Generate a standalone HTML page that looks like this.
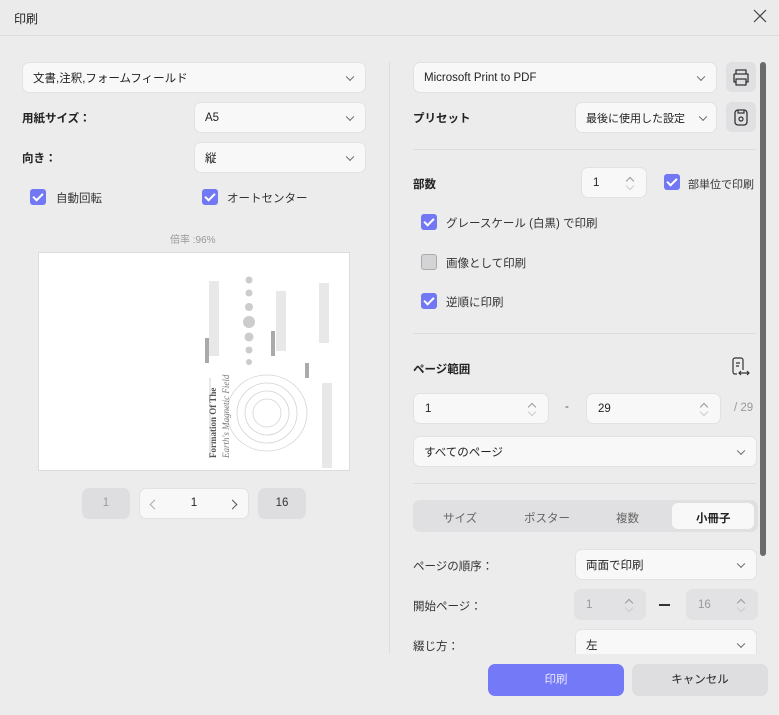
<!DOCTYPE html>
<html><head><meta charset="utf-8"><style>
*{box-sizing:border-box;margin:0;padding:0}
body{width:779px;height:715px;background:#ececec;font-family:"Liberation Sans","Noto Sans CJK JP",sans-serif;font-size:11.5px;color:#222;position:relative;overflow:hidden}
.a{position:absolute}
.dd{position:absolute;background:#f8f8f9;border:1px solid #e2e2e4;border-radius:7px;display:flex;align-items:center;padding-left:10px;font-size:11.5px;color:#222}
.dd .chev{position:absolute;right:12px;top:50%;width:6px;height:6px;border-right:1.2px solid #666;border-bottom:1.2px solid #666;transform:translateY(-70%) rotate(45deg)}
.lbl{position:absolute;font-size:11.5px;font-weight:bold;color:#222}
.lbl2{position:absolute;font-size:11.5px;color:#333}
.cb{position:absolute;width:16px;height:16px;border-radius:3px;background:#7277f3}
.cb::after{content:"";position:absolute;left:5px;top:2px;width:4px;height:8px;border-right:2px solid #fff;border-bottom:2px solid #fff;transform:rotate(45deg)}
.cb.off{background:#d4d4d6;border:1px solid #aaa}
.cb.off::after{display:none}
.sp{position:absolute;background:#f8f8f9;border:1px solid #e2e2e4;border-radius:7px;display:flex;align-items:center;padding-left:11px;font-size:11.5px}
.sp.dis{background:#e2e2e4;color:#999}
.arr{position:absolute;right:12px;top:8px;width:8px;height:14px}
.arr::before,.arr::after{content:"";position:absolute;left:1px;width:5px;height:5px;border-left:1.2px solid #999;border-top:1.2px solid #999}
.arr::before{top:2px;transform:rotate(45deg)}
.arr::after{top:7px;transform:rotate(225deg);border-color:#ccc}
.hr{position:absolute;height:1px;background:#dcdcdc}
.ib{position:absolute;width:30px;height:30px;background:#e0e0e2;border-radius:6px}
</style></head><body>
<div class="a" style="left:0;top:0;width:779px;height:36px;background:#ebebeb;border-bottom:1px solid #dcdcdc"></div>
<div class="a" style="left:14px;top:10px;font-size:12px">印刷</div>
<svg class="a" style="left:753px;top:9px" width="14" height="14"><path d="M1 1L13 13M13 1L1 13" stroke="#444" stroke-width="1.2"/></svg>
<div class="a" style="left:389px;top:62px;width:1px;height:592px;background:#dedede"></div>

<div class="dd" style="left:22px;top:62px;width:344px;height:31px">文書,注釈,フォームフィールド<span class="chev"></span></div>
<div class="lbl" style="left:22px;top:110px">用紙サイズ：</div>
<div class="dd" style="left:194px;top:102px;width:172px;height:31px">A5<span class="chev"></span></div>
<div class="lbl" style="left:22px;top:150px">向き：</div>
<div class="dd" style="left:194px;top:142px;width:172px;height:31px">縦<span class="chev"></span></div>
<div class="cb" style="left:30px;top:189px"></div><div class="lbl2" style="left:56px;top:190px">自動回転</div>
<div class="cb" style="left:202px;top:189px"></div><div class="lbl2" style="left:227px;top:190px">オートセンター</div>
<div class="a" style="left:170px;top:231px;font-size:10px;color:#999">倍率 :96%</div>
<div class="a" style="left:38px;top:252px;width:312px;height:219px;background:#fff;border:1px solid #dcdcdc">
<svg width="310" height="217" style="position:absolute;left:0;top:0">
<g fill="none" stroke="#d4d4d4" stroke-width="0.8">
<ellipse cx="228" cy="160" rx="40" ry="38"/><ellipse cx="228" cy="160" rx="30" ry="30"/><ellipse cx="228" cy="160" rx="22" ry="22"/><ellipse cx="228" cy="160" rx="14" ry="14"/>
</g>
<g fill="#ccc"><circle cx="210" cy="27" r="3.5"/><circle cx="210" cy="40" r="3.5"/><circle cx="210" cy="54" r="4"/><circle cx="210" cy="69" r="6"/><circle cx="210" cy="84" r="4.5"/><circle cx="210" cy="97" r="3.5"/><circle cx="210" cy="109" r="3"/></g>
<g fill="#e8e8e8"><rect x="170" y="28" width="10" height="75"/><rect x="237" y="38" width="10" height="60"/><rect x="280" y="30" width="10" height="60"/><rect x="283" y="130" width="10" height="85"/><rect x="170" y="125" width="2" height="80"/></g>
<rect x="166" y="85" width="4" height="25" fill="#aaa"/><rect x="232" y="78" width="4" height="25" fill="#aaa"/><rect x="266" y="110" width="4" height="15" fill="#aaa"/>
<text transform="translate(177,205) rotate(-90)" font-family="Liberation Serif" font-size="9" font-weight="bold" fill="#555">Formation Of The</text>
<text transform="translate(190,205) rotate(-90)" font-family="Liberation Serif" font-size="9" font-style="italic" fill="#777">Earth's Magnetic Field</text>
</svg></div>
<div class="a" style="left:82px;top:488px;width:48px;height:31px;background:#dedee0;border-radius:7px;text-align:center;line-height:31px;color:#999">1</div>
<div class="a" style="left:139px;top:488px;width:110px;height:31px;background:#f8f8f9;border:1px solid #e2e2e4;border-radius:7px;text-align:center;line-height:29px">1</div>
<div class="a" style="left:151px;top:497px;width:7px;height:7px;border-left:1.2px solid #aaa;border-bottom:1.2px solid #aaa;transform:rotate(45deg);margin-top:4px"></div>
<div class="a" style="left:229px;top:501px;width:7px;height:7px;border-right:1.2px solid #555;border-top:1.2px solid #555;transform:rotate(45deg)"></div>
<div class="a" style="left:258px;top:488px;width:48px;height:31px;background:#dedee0;border-radius:7px;text-align:center;line-height:31px;color:#333">16</div>

<div class="dd" style="left:413px;top:62px;width:304px;height:31px">Microsoft Print to PDF<span class="chev"></span></div>
<div class="ib" style="left:726px;top:62px"><svg width="30" height="30"><path d="M10 12V8h10v4M8 12h14v8h-2M10 20H8v-8M10 17h10v6H10z" fill="none" stroke="#333" stroke-width="1.3" stroke-linejoin="round"/></svg></div>
<div class="lbl" style="left:413px;top:110px">プリセット</div>
<div class="dd" style="left:575px;top:102px;width:142px;height:31px;font-size:11px">最後に使用した設定<span class="chev" style="right:10px"></span></div>
<div class="ib" style="left:726px;top:102px"><svg width="30" height="30"><rect x="9" y="8" width="12" height="15" rx="3" fill="none" stroke="#333" stroke-width="1.3"/><path d="M12 8v3h6V8" fill="none" stroke="#333" stroke-width="1.2"/><circle cx="15" cy="17" r="2" fill="none" stroke="#333" stroke-width="1.2"/></svg></div>
<div class="hr" style="left:413px;top:149px;width:343px"></div>
<div class="lbl" style="left:413px;top:176px">部数</div>
<div class="sp" style="left:581px;top:167px;width:66px;height:31px">1<span class="arr"></span></div>
<div class="cb" style="left:664px;top:174px"></div><div class="lbl2" style="left:688px;top:176px;white-space:nowrap;font-size:11px">部単位で印刷</div>
<div class="cb" style="left:421px;top:214px"></div><div class="lbl2" style="left:446px;top:215px">グレースケール (白黒) で印刷</div>
<div class="cb off" style="left:421px;top:254px"></div><div class="lbl2" style="left:446px;top:255px">画像として印刷</div>
<div class="cb" style="left:421px;top:293px"></div><div class="lbl2" style="left:446px;top:294px">逆順に印刷</div>
<div class="hr" style="left:413px;top:333px;width:343px"></div>
<div class="lbl" style="left:413px;top:361px">ページ範囲</div>
<svg class="a" style="left:731px;top:356px" width="20" height="22"><path d="M12 14V4a2 2 0 0 0-2-2H4a2 2 0 0 0-2 2v12a2 2 0 0 0 2 2h2M5 7h4M5 10h3M8 17h10M10 15l-2 2 2 2M16 15l2 2-2 2" fill="none" stroke="#333" stroke-width="1.2"/></svg>
<div class="sp" style="left:413px;top:393px;width:136px;height:31px">1<span class="arr"></span></div>
<div class="a" style="left:565px;top:401px;color:#555">-</div>
<div class="sp" style="left:586px;top:393px;width:135px;height:31px">29<span class="arr"></span></div>
<div class="a" style="left:734px;top:402px;color:#999">/ 29</div>
<div class="dd" style="left:413px;top:436px;width:344px;height:31px">すべてのページ<span class="chev"></span></div>
<div class="hr" style="left:413px;top:483px;width:343px"></div>
<div class="a" style="left:413px;top:500px;width:345px;height:32px;background:#e0e0e2;border-radius:7px"></div>
<div class="a" style="left:672px;top:503px;width:82px;height:26px;background:#f8f8f9;border-radius:6px"></div>
<div class="a" style="left:443px;top:510px;color:#666">サイズ</div>
<div class="a" style="left:524px;top:510px;color:#666">ポスター</div>
<div class="a" style="left:616px;top:510px;color:#666">複数</div>
<div class="a" style="left:696px;top:510px;font-weight:bold">小冊子</div>
<div class="lbl2" style="left:413px;top:558px">ページの順序：</div>
<div class="dd" style="left:575px;top:549px;width:182px;height:31px">両面で印刷<span class="chev"></span></div>
<div class="lbl2" style="left:413px;top:598px">開始ページ：</div>
<div class="sp dis" style="left:574px;top:589px;width:72px;height:31px">1<span class="arr"></span></div>
<div class="a" style="left:659px;top:596px;width:11px;height:1.5px;background:#333;margin-top:8px"></div>
<div class="sp dis" style="left:686px;top:589px;width:72px;height:31px">16<span class="arr"></span></div>
<div class="lbl2" style="left:413px;top:638px">綴じ方：</div>
<div class="a" style="left:575px;top:629px;width:182px;height:25px;overflow:hidden"><div class="dd" style="left:0;top:0;width:182px;height:31px">左<span class="chev" style="top:15px"></span></div></div>
<div class="a" style="left:760px;top:62px;width:6px;height:494px;background:#6b6b6b;border-radius:3px"></div>
<div class="a" style="left:488px;top:664px;width:136px;height:32px;background:#7479f7;border-radius:7px;color:#e8e8ff;text-align:center;line-height:32px">印刷</div>
<div class="a" style="left:632px;top:664px;width:136px;height:32px;background:#dedee0;border-radius:7px;text-align:center;line-height:32px">キャンセル</div>
</body></html>
